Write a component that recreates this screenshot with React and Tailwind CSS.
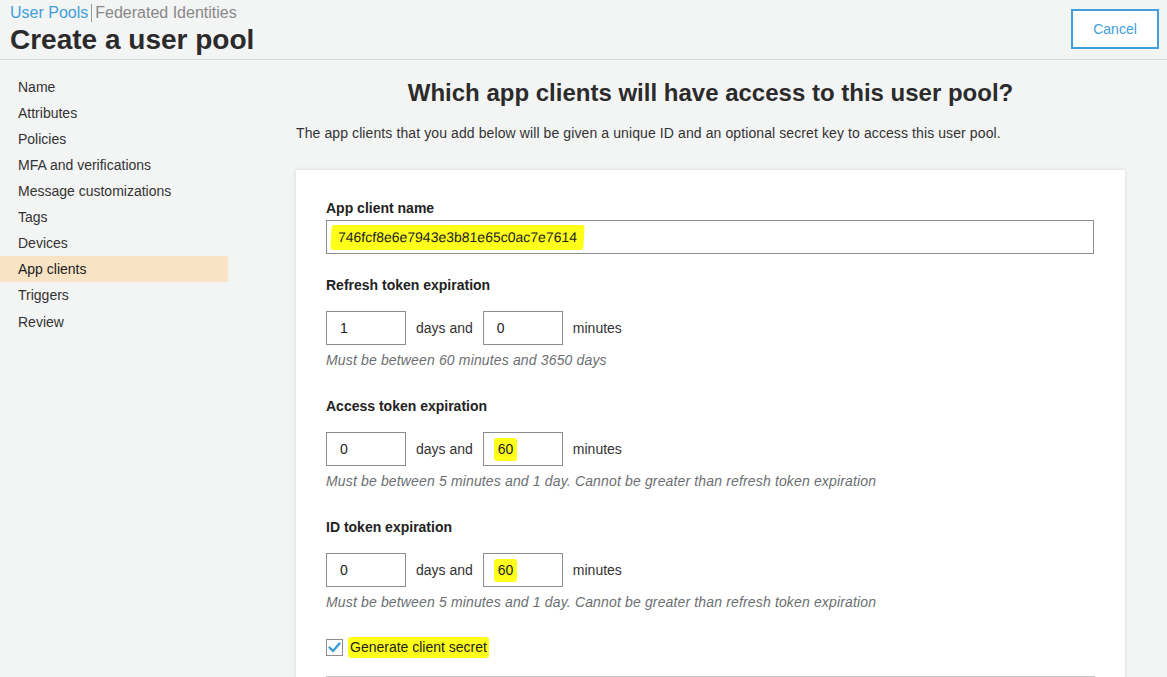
import React from 'react'

const navItems = [
  'Name',
  'Attributes',
  'Policies',
  'MFA and verifications',
  'Message customizations',
  'Tags',
  'Devices',
  'App clients',
  'Triggers',
  'Review',
]

function Marker({ children, className = '' }) {
  return (
    <span className={`bg-[#ffff1a] rounded-[3px] ${className}`}>{children}</span>
  )
}

function Box({ value, hl }) {
  return (
    <div className="w-[80px] h-[34px] border border-[#8d8d8d] bg-white flex items-center pl-[10px] text-[14px] text-[#222]">
      {hl ? <Marker className="px-[4px] py-[1px]">{value}</Marker> : <span className="pl-[3px]">{value}</span>}
    </div>
  )
}

function TokenSection({ label, days, minutes, hlMinutes, help, first }) {
  return (
    <div className={first ? 'mt-[21px]' : 'mt-[27px]'}>
      <div className="text-[14px] font-bold leading-[20px] text-[#222]">{label}</div>
      <div className="mt-[16px] flex items-center">
        <Box value={days} />
        <span className="mx-[10px] text-[14px] text-[#333]">days and</span>
        <Box value={minutes} hl={hlMinutes} />
        <span className="ml-[10px] text-[14px] text-[#333]">minutes</span>
      </div>
      <div className="mt-[6px] text-[14px] italic leading-[18px] tracking-[0.15px] text-[#6b6f73]">{help}</div>
    </div>
  )
}

export default function App() {
  return (
    <div className="h-[677px] overflow-hidden bg-[#f3f4f4] font-['Liberation_Sans',Arial,sans-serif] text-[#333]">
      {/* Header */}
      <header className="h-[60px] border-b border-[#d6d8d8] flex justify-between pl-[10px] pr-[8px]">
        <div>
          <div className="flex items-center text-[16px] leading-[20px] pt-[3px]">
            <span className="text-[#3f9fdc]">User Pools</span>
            <span className="mx-[3px] w-px h-[18px] bg-[#999]" />
            <span className="text-[#888]">Federated Identities</span>
          </div>
          <h1 className="text-[28px] font-bold leading-[32px] text-[#2b2b2b] mt-[1px]">Create a user pool</h1>
        </div>
        <button className="mt-[9px] w-[88px] h-[40px] border-2 border-[#419fdc] bg-white text-[#3f9fdc] text-[14px]">
          Cancel
        </button>
      </header>

      <div className="flex">
        {/* Sidebar */}
        <nav className="w-[228px] pt-[14px]">
          {navItems.map((item) => (
            <div
              key={item}
              className={`h-[26px] pl-[18px] flex items-center text-[14px] ${
                item === 'App clients' ? 'bg-[#f8e4c5] text-[#222]' : 'text-[#333]'
              } ${item === 'Review' ? 'pt-[2px]' : ''}`}
            >
              {item}
            </div>
          ))}
        </nav>

        {/* Main */}
        <main className="flex-1 pl-[68px] pr-[42px] pt-[19px]">
          <h2 className="text-center text-[24px] font-bold leading-[28px] text-[#2b2b2b]">
            Which app clients will have access to this user pool?
          </h2>
          <p className="mt-[17px] text-[14px] leading-[18px] tracking-[0.1px] text-[#333]">
            The app clients that you add below will be given a unique ID and an optional secret key to access this user pool.
          </p>

          <div className="mt-[28px] bg-white shadow-[0_0_4px_rgba(0,0,0,0.12)] px-[30px] pt-[28px] pb-[40px]">
            <div className="text-[14px] font-bold leading-[20px] text-[#222]">App client name</div>
            <div className="mt-[2px] h-[34px] w-[768px] border border-[#8d8d8d] flex items-center pl-[4px] text-[14px] text-[#222]">
              <Marker className="px-[7px] py-[2px] -skew-x-3">746fcf8e6e7943e3b81e65c0ac7e7614</Marker>
            </div>

            <TokenSection
              first
              label="Refresh token expiration"
              days="1"
              minutes="0"
              help="Must be between 60 minutes and 3650 days"
            />
            <TokenSection
              label="Access token expiration"
              days="0"
              minutes="60"
              hlMinutes
              help="Must be between 5 minutes and 1 day. Cannot be greater than refresh token expiration"
            />
            <TokenSection
              label="ID token expiration"
              days="0"
              minutes="60"
              hlMinutes
              help="Must be between 5 minutes and 1 day. Cannot be greater than refresh token expiration"
            />

            <div className="mt-[26px] flex items-center">
              <svg width="17" height="17" viewBox="0 0 17 17" className="shrink-0">
                <rect x="0.5" y="0.5" width="16" height="16" fill="#fff" stroke="#8d8d8d" />
                <path d="M3.5 8.5 L7 12 L13.5 4.5" fill="none" stroke="#3c9ad8" strokeWidth="2.4" strokeLinecap="round" strokeLinejoin="round" />
              </svg>
              <Marker className="ml-[5px] px-[2px] text-[14px] text-[#222]">Generate client secret</Marker>
            </div>
            <div className="mt-[18px] h-px bg-[#c8c8c8]" />
          </div>
        </main>
      </div>
    </div>
  )
}
